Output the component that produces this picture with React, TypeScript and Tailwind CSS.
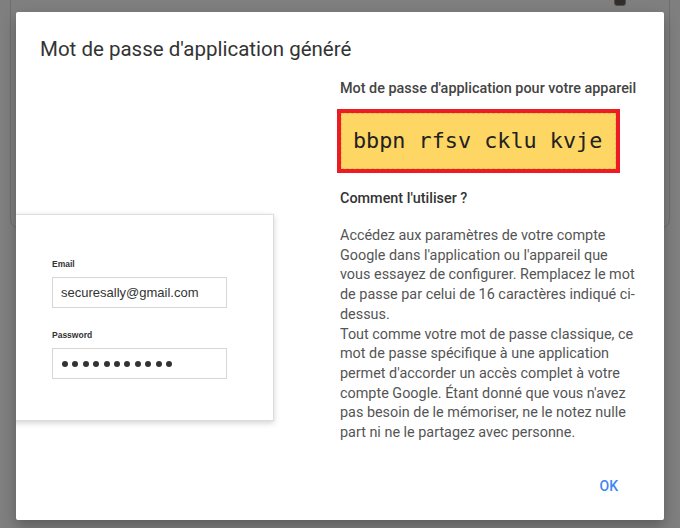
import React from "react";

const lines = [
  "Accédez aux paramètres de votre compte",
  "Google dans l'application ou l'appareil que",
  "vous essayez de configurer. Remplacez le mot",
  "de passe par celui de 16 caractères indiqué ci-",
  "dessus.",
  "Tout comme votre mot de passe classique, ce",
  "mot de passe spécifique à une application",
  "permet d'accorder un accès complet à votre",
  "compte Google. Étant donné que vous n'avez",
  "pas besoin de le mémoriser, ne le notez nulle",
  "part ni ne le partagez avec personne.",
];

export default function App() {
  return (
    <div className="relative w-[680px] h-[528px] overflow-hidden bg-[#7f7f7f]" style={{ fontFamily: "Roboto, 'Noto Sans', sans-serif" }}>
      {/* background page content under overlay */}
      <div className="absolute left-[10px] top-[-20px] w-[660px] h-[248px] rounded-[8px] border border-[#6e6e6e]" />
      <div className="absolute left-[614px] top-[-6px] w-[12px] h-[12px] rounded-[3px] bg-[#2e2e2e] border border-[#5a4a3a]" />

      {/* dialog */}
      <div className="absolute left-[16px] top-[12px] w-[648px] h-[508px] bg-white rounded-[2px] overflow-hidden flex flex-col shadow-[0_6px_14px_rgba(0,0,0,0.28)]">
        <div className="pl-[24px] pt-[23px] text-[20.5px] leading-[28px] text-[#333333]">
          Mot de passe d'application généré
        </div>
        <div className="flex flex-1">
          <div className="w-[308px] pt-[151px]">
            <div className="ml-[-26px] w-[284px] h-[207px] border border-[#dcdcdc] bg-white shadow-[0_2px_6px_rgba(0,0,0,0.18)] pt-[44px] pl-[61px]" style={{ fontFamily: "'Liberation Sans', Arial, sans-serif" }}>
              <div className="text-[8.5px] font-bold leading-[10px] text-[#333]">Email</div>
              <div className="mt-[8px] w-[175px] h-[31px] border border-[#d6d6d6] flex items-center pl-[8px] text-[13px] text-[#333]">
                securesally@gmail.com
              </div>
              <div className="mt-[22px] text-[8.5px] font-bold leading-[10px] text-[#333]">Password</div>
              <div className="mt-[8px] w-[175px] h-[31px] border border-[#d6d6d6] flex items-center pl-[9px] gap-[4.4px]">
                {Array.from({ length: 11 }).map((_, i) => (
                  <span key={i} className="w-[6px] h-[6px] rounded-full bg-[#333]" />
                ))}
              </div>
            </div>
          </div>
          <div className="w-[310px] ml-[16px] pt-[16px]">
            <div className="text-[14.4px] leading-[20px] font-medium text-[#444]">Mot de passe d'application pour votre appareil</div>
            <div className="mt-[10px] ml-[-3px] w-[283px] h-[64px] border-[4px] border-[#ed1c24] bg-[#fdd663] flex">
              <div className="flex-1 border border-dashed border-[#e6c257] flex items-center pl-[11px]" style={{ fontFamily: "'DejaVu Sans Mono', monospace" }}>
                <span className="text-[21.8px] text-[#222]">bbpn rfsv cklu kvje</span>
              </div>
            </div>
            <div className="mt-[16px] text-[14.4px] leading-[20px] font-medium text-[#333]">Comment l'utiliser ?</div>
            <div className="mt-[17px] text-[14.4px] leading-[19.7px] text-[#555] whitespace-nowrap">
              {lines.map((l, i) => (
                <div key={i}>{l}</div>
              ))}
            </div>
          </div>
        </div>
        <div className="flex justify-end pr-[46px] pb-[24px]">
          <span className="text-[14px] font-medium text-[#4285f4] leading-[20px]">OK</span>
        </div>
      </div>
    </div>
  );
}
